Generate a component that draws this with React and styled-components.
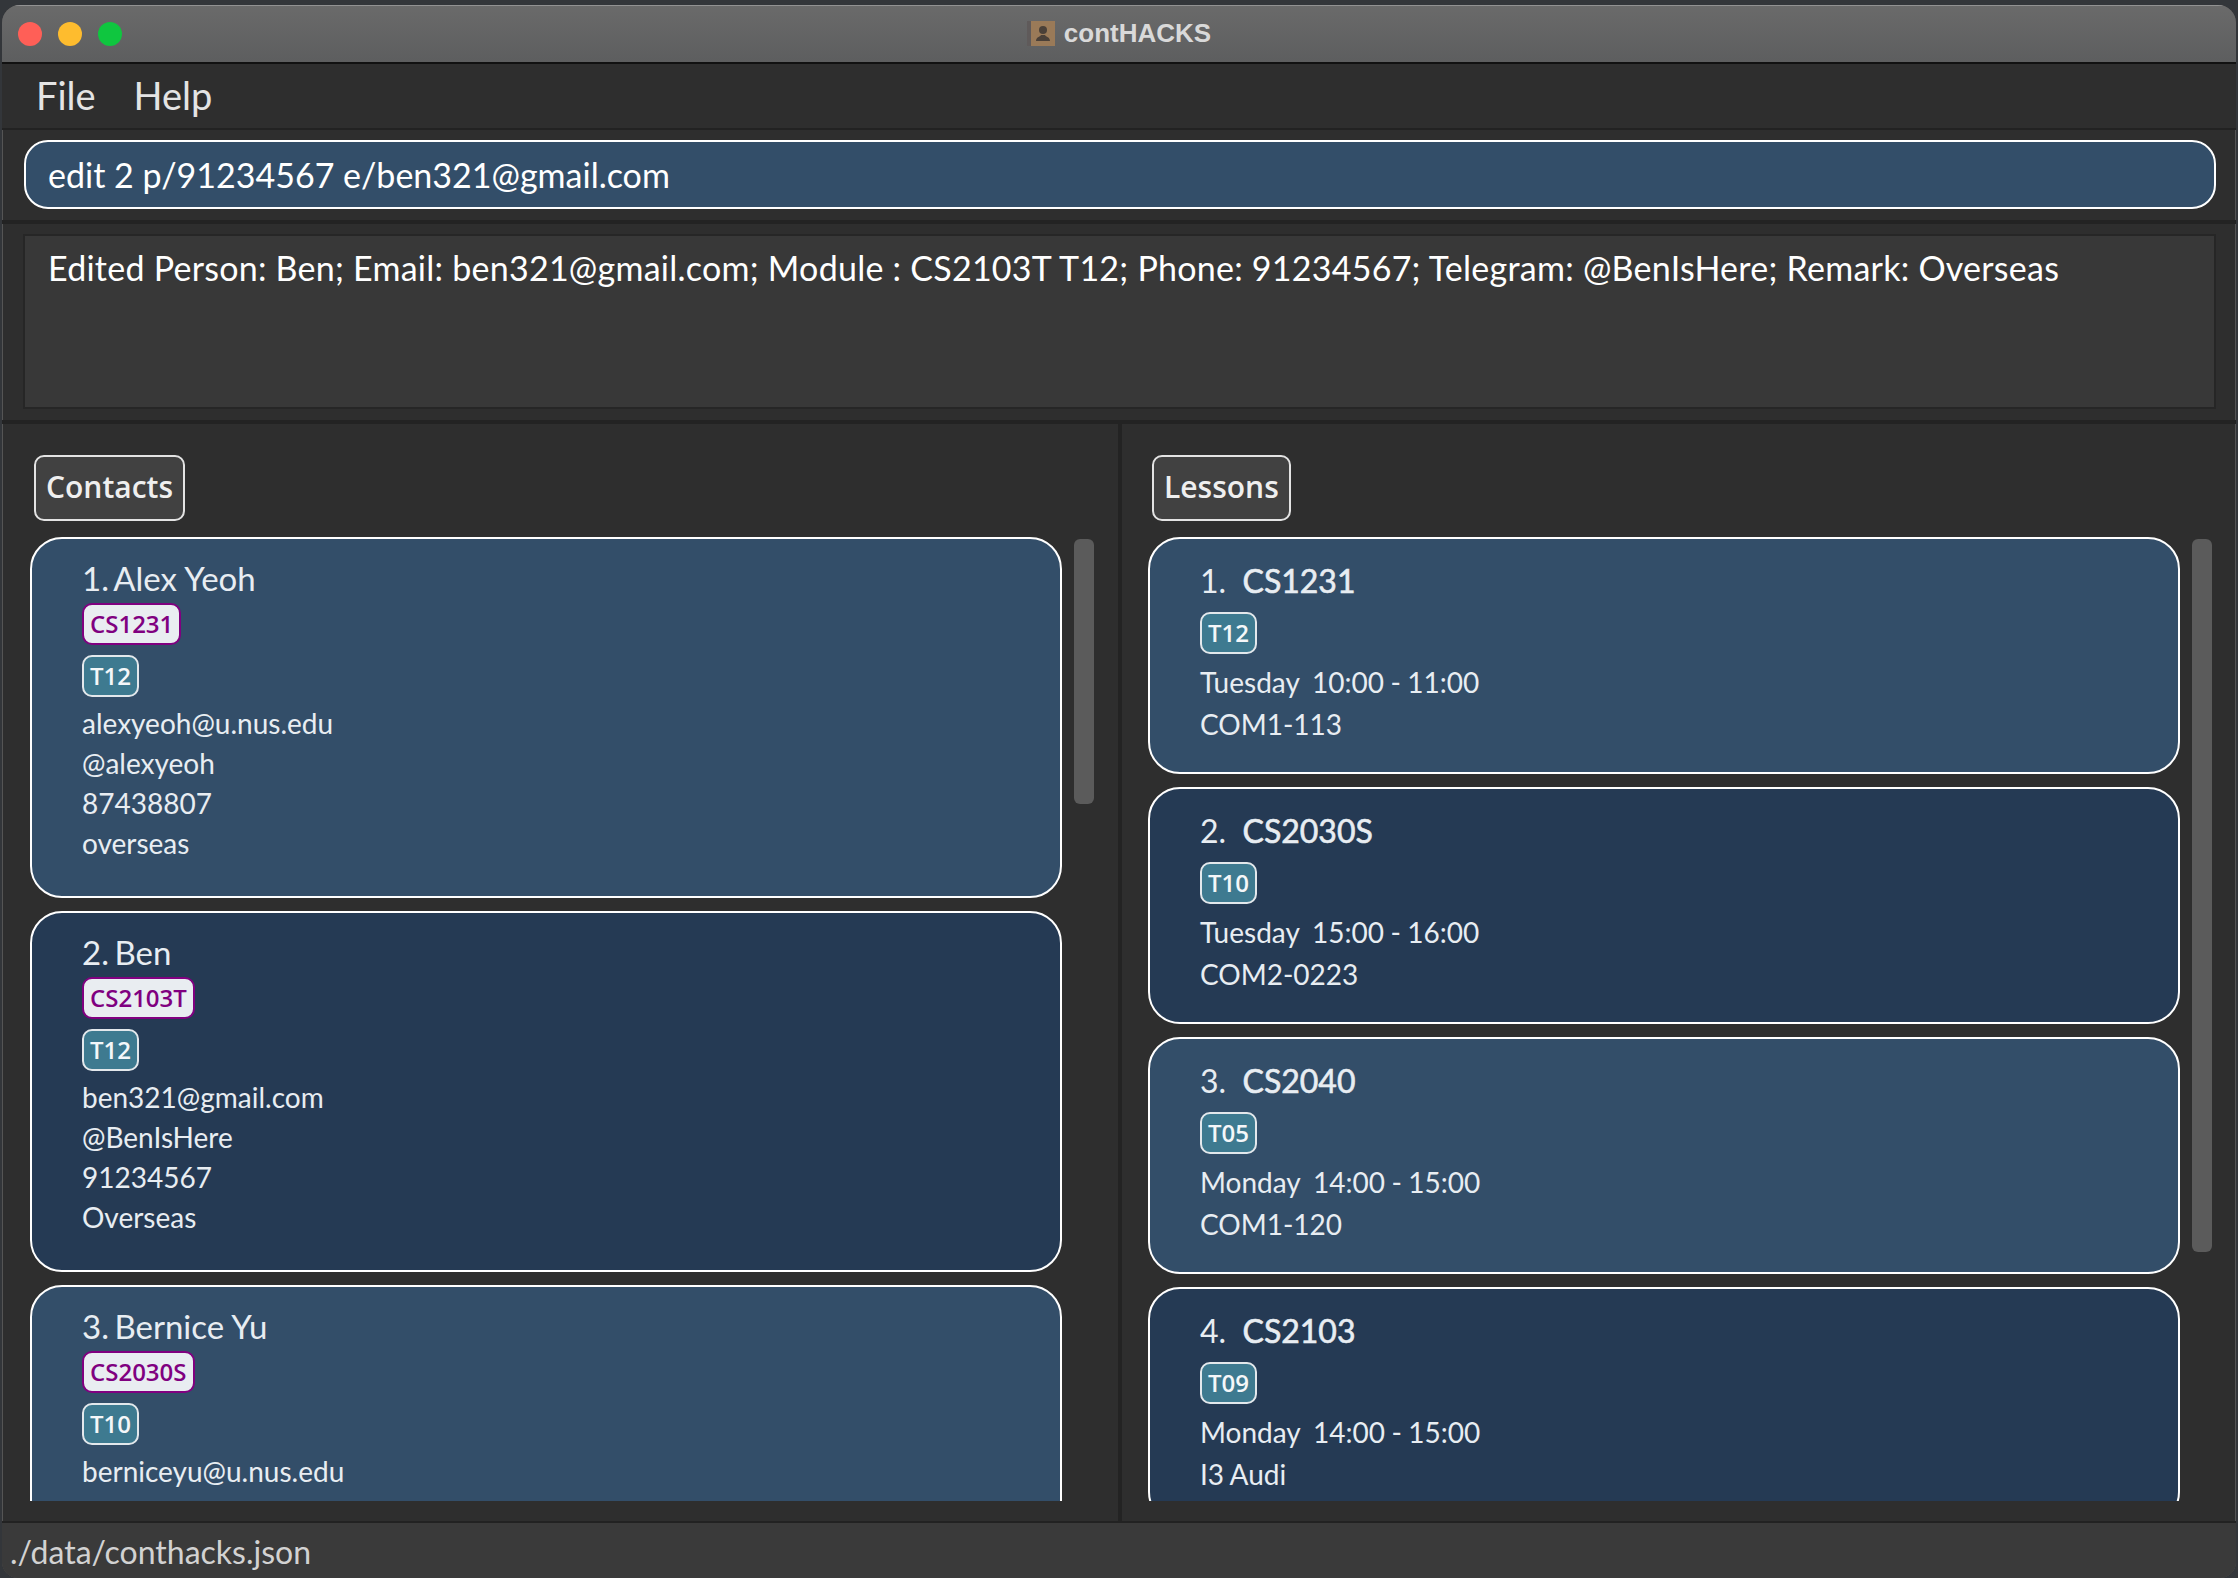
import React from "react";
import styled, { createGlobalStyle } from "styled-components";

const Global = createGlobalStyle`
  html, body { margin: 0; padding: 0; background: #2f3234; }
  body { width: 2238px; height: 1578px; overflow: hidden; }
`;

const Page = styled.div`
  width: 2238px;
  height: 1578px;
  padding: 5px 0 0 2px;
  box-sizing: border-box;
  background: #33363a;
`;

const Window = styled.div`
  width: 2234px;
  height: 1573px;
  display: flex;
  flex-direction: column;
  border-radius: 18px 18px 16px 16px;
  overflow: hidden;
  background: #2e2e2e;
  font-family: "Lato", sans-serif;
  box-shadow: inset 0 0 0 1px #555;
`;

const TitleBar = styled.div`
  height: 59px;
  flex: none;
  box-sizing: border-box;
  display: grid;
  grid-template-columns: 1fr auto 1fr;
  align-items: center;
  padding: 0 16px;
  background: linear-gradient(#6a6a6a, #5d5e5f);
  border-top: 1px solid #929292;
  border-bottom: 2px solid #111;
`;

const Lights = styled.div`
  display: flex;
  gap: 16px;
`;

const Light = styled.span`
  width: 24px;
  height: 24px;
  border-radius: 50%;
  background: ${(p) => p.$color};
`;

const WindowTitle = styled.div`
  display: flex;
  align-items: center;
  gap: 9px;
  color: #d9d9d9;
  font: 700 26px "Liberation Sans", sans-serif;
  padding-bottom: 2px;
`;

const MenuBar = styled.div`
  height: 66px;
  flex: none;
  box-sizing: border-box;
  display: flex;
  align-items: center;
  gap: 38px;
  padding: 0 0 3px 34px;
  background: #2e2e2e;
  border-bottom: 2px solid #222;
  color: #e4e4e4;
  font-size: 38px;
`;

const CommandPanel = styled.div`
  height: 90px;
  flex: none;
  box-sizing: border-box;
  padding: 10px 20px 11px 22px;
`;

const CommandInput = styled.div`
  height: 69px;
  box-sizing: border-box;
  border: 2.5px solid #fff;
  border-radius: 24px;
  background: #334e69;
  color: #fff;
  font-size: 34px;
  line-height: 65px;
  padding-left: 22px;
`;

const Rule = styled.div`
  height: 4px;
  flex: none;
  background: #232323;
`;

const ResultPanel = styled.div`
  height: 196px;
  flex: none;
  box-sizing: border-box;
  padding: 10px 20px 11px 21px;
`;

const ResultBox = styled.div`
  height: 175px;
  box-sizing: border-box;
  border: 2px solid #262626;
  background: #383838;
  color: #fff;
  font-size: 34px;
  letter-spacing: 0.25px;
  line-height: 44px;
  padding: 10px 0 0 23px;
`;

const Split = styled.div`
  height: 1097px;
  flex: none;
  display: grid;
  grid-template-columns: 1116px 4px 1fr;
`;

const Divider = styled.div`
  background: #232323;
`;

const Column = styled.div`
  min-width: 0;
  height: 1097px;
  box-sizing: border-box;
  padding: 31px 0 20px ${(p) => p.$left}px;
  display: flex;
  flex-direction: column;
`;

const SectionLabel = styled.div`
  align-self: flex-start;
  height: 66px;
  box-sizing: border-box;
  margin: 0 0 16px ${(p) => p.$indent}px;
  padding: 0 10px;
  border: 2px solid #e3e3e3;
  border-radius: 10px;
  background: #414141;
  color: #efefef;
  font: 600 30px/60px "Open Sans", sans-serif;
`;

const ListRow = styled.div`
  flex: 1;
  min-height: 0;
  display: flex;
`;

const CardList = styled.div`
  width: 1032px;
  flex: none;
  height: 964px;
  overflow: hidden;
  display: flex;
  flex-direction: column;
  gap: 13px;
`;

const Track = styled.div`
  width: 20px;
  margin: 2px 0 0 ${(p) => p.$gap}px;
  flex: none;
`;

const Thumb = styled.div`
  height: ${(p) => p.$height}px;
  border-radius: 6px;
  background: #5b5b5b;
`;

const Card = styled.div`
  flex: none;
  height: ${(p) => p.$height}px;
  box-sizing: border-box;
  border: 2.5px solid #fff;
  border-radius: 32px;
  background: ${(p) => (p.$odd ? "#334e69" : "#253a54")};
  padding: ${(p) => p.$top}px 0 0 50px;
  color: #e8edf2;
`;

const Name = styled.div`
  font-size: 33px;
  line-height: 40px;
  height: 45px;
`;

const Index = styled.span`
  margin-right: -3px;
`;

const TagRow = styled.div`
  display: flex;
  margin-bottom: ${(p) => p.$after}px;
`;

const Tag = styled.span`
  height: 42px;
  box-sizing: border-box;
  padding: 0 6px;
  border-radius: 10px;
  border: 2px solid ${(p) => (p.$module ? "#800080" : "#e3e8ec")};
  background: ${(p) => (p.$module ? "#e9edf1" : "#3e7a90")};
  color: ${(p) => (p.$module ? "#800080" : "#f4f7f9")};
  font: 600 24px/37px "Open Sans", sans-serif;
`;

const Detail = styled.div`
  font-size: 28px;
  line-height: 40px;
`;

const LessonTitle = styled.div`
  font-size: 32px;
  line-height: 40px;
  height: 51px;
  white-space: pre;
`;

const LessonCode = styled.span`
  -webkit-text-stroke: 0.6px #e8edf2;
`;

const LessonDetail = styled.div`
  font-size: 28px;
  line-height: 42px;
  word-spacing: -0.7px;
  white-space: pre;
`;

const StatusBar = styled.div`
  flex: 1;
  box-sizing: border-box;
  border-top: 2px solid #222;
  background: #3a3a3a;
  color: #d2d2d2;
  font-size: 32px;
  line-height: 46px;
  padding: 6px 0 0 8px;
`;

const BookIcon = () => (
  <svg width="28" height="25" viewBox="0 0 28 25" aria-hidden="true">
    <rect x="0" y="0" width="5" height="25" fill="#5f5a5a" />
    <rect x="4" y="0" width="24" height="25" fill="#9a7a58" />
    <circle cx="16" cy="9" r="4" fill="#4a4038" />
    <path d="M9 20c0-4 4-4 5-6h4c1 2 5 2 5 6z" fill="#4a4038" />
  </svg>
);

const contacts = [
  { n: "1.", name: "Alex Yeoh", mod: "CS1231", tut: "T12", lines: ["alexyeoh@u.nus.edu", "@alexyeoh", "87438807", "overseas"] },
  { n: "2.", name: "Ben", mod: "CS2103T", tut: "T12", lines: ["ben321@gmail.com", "@BenIsHere", "91234567", "Overseas"] },
  { n: "3.", name: "Bernice Yu", mod: "CS2030S", tut: "T10", lines: ["berniceyu@u.nus.edu"] },
];

const lessons = [
  { n: "1.", code: "CS1231", tut: "T12", time: "Tuesday  10:00 - 11:00", room: "COM1-113" },
  { n: "2.", code: "CS2030S", tut: "T10", time: "Tuesday  15:00 - 16:00", room: "COM2-0223" },
  { n: "3.", code: "CS2040", tut: "T05", time: "Monday  14:00 - 15:00", room: "COM1-120" },
  { n: "4.", code: "CS2103", tut: "T09", time: "Monday  14:00 - 15:00", room: "I3 Audi" },
];

export default function App() {
  return (
    <Page>
      <Global />
      <Window>
        <TitleBar>
          <Lights>
            <Light $color="#ff5f57" />
            <Light $color="#febc2e" />
            <Light $color="#0fc63f" />
          </Lights>
          <WindowTitle>
            <BookIcon />
            contHACKS
          </WindowTitle>
          <span />
        </TitleBar>
        <MenuBar>
          <span>File</span>
          <span>Help</span>
        </MenuBar>
        <CommandPanel>
          <CommandInput>edit 2 p/91234567 e/ben321@gmail.com</CommandInput>
        </CommandPanel>
        <Rule />
        <ResultPanel>
          <ResultBox>
            Edited Person: Ben; Email: ben321@gmail.com; Module : CS2103T T12; Phone: 91234567; Telegram: @BenIsHere; Remark: Overseas
          </ResultBox>
        </ResultPanel>
        <Rule />
        <Split>
          <Column $left={28}>
            <SectionLabel $indent={4}>Contacts</SectionLabel>
            <ListRow>
              <CardList>
                {contacts.map((c, i) => (
                  <Card key={c.name} $height={361} $top={19} $odd={i % 2 === 0}>
                    <Name>
                      <Index>{c.n}</Index> {c.name}
                    </Name>
                    <TagRow $after={10}>
                      <Tag $module>{c.mod}</Tag>
                    </TagRow>
                    <TagRow $after={6}>
                      <Tag>{c.tut}</Tag>
                    </TagRow>
                    {c.lines.map((l) => (
                      <Detail key={l}>{l}</Detail>
                    ))}
                  </Card>
                ))}
              </CardList>
              <Track $gap={12}>
                <Thumb $height={265} />
              </Track>
            </ListRow>
          </Column>
          <Divider />
          <Column $left={26}>
            <SectionLabel $indent={4}>Lessons</SectionLabel>
            <ListRow>
              <CardList>
                {lessons.map((l, i) => (
                  <Card key={l.code} $height={237} $top={22} $odd={i % 2 === 0}>
                    <LessonTitle>
                      {l.n}  <LessonCode>{l.code}</LessonCode>
                    </LessonTitle>
                    <TagRow $after={7}>
                      <Tag>{l.tut}</Tag>
                    </TagRow>
                    <LessonDetail>{l.time}</LessonDetail>
                    <LessonDetail>{l.room}</LessonDetail>
                  </Card>
                ))}
              </CardList>
              <Track $gap={12}>
                <Thumb $height={713} />
              </Track>
            </ListRow>
          </Column>
        </Split>
        <StatusBar>./data/conthacks.json</StatusBar>
      </Window>
    </Page>
  );
}
